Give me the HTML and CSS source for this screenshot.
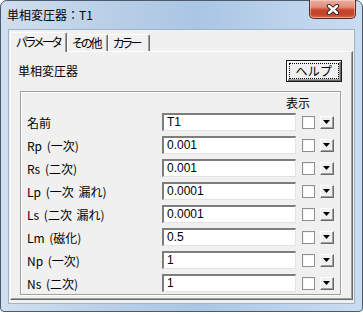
FILE: index.html
```html
<!DOCTYPE html>
<html lang="ja">
<head>
<meta charset="utf-8">
<title>単相変圧器：T1</title>
<link rel="stylesheet" href="styles.css">
</head>
<body>
<div class="window">
  <div class="titlebar">
    <span class="title">単相変圧器：T1</span>
    <div class="close">
      <svg width="14" height="11" viewBox="0 0 14 11">
        <path d="M3 2 L11 9 M11 2 L3 9" stroke="#3d2a2a" stroke-width="4.4" stroke-linecap="round" fill="none"/>
        <path d="M3 2 L11 9 M11 2 L3 9" stroke="#ffffff" stroke-width="2.4" stroke-linecap="round" fill="none"/>
      </svg>
    </div>
  </div>
  <div class="client">
    <div class="tabs">
      <div class="tab active">パラメータ</div>
      <div class="tab">その他</div>
      <div class="tab">カラー</div>
    </div>
    <div class="panel">
      <div class="panel-head">
        <span class="panel-title">単相変圧器</span>
        <button class="help"><span class="focus">ヘルプ</span></button>
      </div>
      <div class="group">
        <div class="show-head">表示</div>
        <div class="row"><span class="label">名前</span><span class="input">T1</span><span class="check"></span><span class="drop"><svg width="7" height="4" viewBox="0 0 7 4"><path d="M0 0 H7 L3.5 4 Z" fill="#000"/></svg></span></div>
        <div class="row"><span class="label">Rp (一次)</span><span class="input">0.001</span><span class="check"></span><span class="drop"><svg width="7" height="4" viewBox="0 0 7 4"><path d="M0 0 H7 L3.5 4 Z" fill="#000"/></svg></span></div>
        <div class="row"><span class="label">Rs (二次)</span><span class="input">0.001</span><span class="check"></span><span class="drop"><svg width="7" height="4" viewBox="0 0 7 4"><path d="M0 0 H7 L3.5 4 Z" fill="#000"/></svg></span></div>
        <div class="row"><span class="label">Lp (一次 漏れ)</span><span class="input">0.0001</span><span class="check"></span><span class="drop"><svg width="7" height="4" viewBox="0 0 7 4"><path d="M0 0 H7 L3.5 4 Z" fill="#000"/></svg></span></div>
        <div class="row"><span class="label">Ls (二次 漏れ)</span><span class="input">0.0001</span><span class="check"></span><span class="drop"><svg width="7" height="4" viewBox="0 0 7 4"><path d="M0 0 H7 L3.5 4 Z" fill="#000"/></svg></span></div>
        <div class="row"><span class="label">Lm (磁化)</span><span class="input">0.5</span><span class="check"></span><span class="drop"><svg width="7" height="4" viewBox="0 0 7 4"><path d="M0 0 H7 L3.5 4 Z" fill="#000"/></svg></span></div>
        <div class="row"><span class="label">Np (一次)</span><span class="input">1</span><span class="check"></span><span class="drop"><svg width="7" height="4" viewBox="0 0 7 4"><path d="M0 0 H7 L3.5 4 Z" fill="#000"/></svg></span></div>
        <div class="row"><span class="label">Ns (二次)</span><span class="input">1</span><span class="check"></span><span class="drop"><svg width="7" height="4" viewBox="0 0 7 4"><path d="M0 0 H7 L3.5 4 Z" fill="#000"/></svg></span></div>
      </div>
    </div>
  </div>
</div>
</body>
</html>
```

FILE: styles.css
```css
html, body {
  margin: 0;
  padding: 0;
  background: #ffffff;
}

body {
  font-family: "Noto Sans CJK JP", "Noto Sans", sans-serif;
  font-size: 12px;
  color: #000;
}

.window {
  box-sizing: border-box;
  width: 363px;
  height: 312px;
  border: 1px solid #4b5a6c;
  border-radius: 7px 7px 4px 4px;
  padding: 0 7px 7px 7px;
  background: linear-gradient(to right, #d0dfee 0%, #b9cfe7 30%, #aac6e4 55%, #bcd3ec 80%, #cadcf0 100%);
  display: flex;
  flex-direction: column;
}

.titlebar {
  height: 28px;
  display: flex;
  justify-content: space-between;
  align-items: flex-start;
  margin: 0 -1px 0 -1px;
}

.title {
  line-height: 28px;
  font-size: 12px;
  color: #000;
}

.close {
  box-sizing: border-box;
  width: 47px;
  height: 19px;
  margin-top: -1px;
  border: 1px solid #5b2a22;
  border-top: none;
  border-radius: 0 0 5px 5px;
  background: linear-gradient(to bottom, #eab0a2 0%, #e08c78 40%, #c9452d 55%, #c4432a 80%, #d7694f 100%);
  box-shadow: inset 0 0 0 1px rgba(255, 220, 210, 0.5);
  display: flex;
  align-items: center;
  justify-content: center;
}

.client {
  flex: 1;
  box-sizing: border-box;
  background: #f0f0f0;
  border: 1px solid #9fb3ca;
  padding: 1px 1px 3px 1px;
  display: flex;
  flex-direction: column;
}

.tabs {
  display: flex;
  align-items: flex-end;
  height: 20px;
  position: relative;
  z-index: 1;
}

.tab {
  box-sizing: border-box;
  width: 41px;
  height: 17px;
  line-height: 15px;
  padding: 0 0 0 4px;
  border-top: 1px solid #ffffff;
  border-left: 1px solid #ffffff;
  border-right: 1px solid #696969;
  box-shadow: inset -1px 0 #a0a0a0;
  border-radius: 2px 2px 0 0;
  background: #f0f0f0;
  font-feature-settings: "palt";
  letter-spacing: -2px;
  white-space: nowrap;
  overflow: hidden;
}

.tab.active {
  width: 57px;
  height: 20px;
  line-height: 17px;
  padding-left: 5px;
  margin-bottom: -1px;
}

.tab:last-child {
  width: 42px;
}

.panel {
  flex: 1;
  box-sizing: border-box;
  border-top: 1px solid #ffffff;
  border-left: 1px solid #ffffff;
  border-right: 1px solid #696969;
  border-bottom: 1px solid #696969;
  box-shadow: inset -1px -1px #a0a0a0;
  background: #f0f0f0;
  padding: 8px 11px 0 7px;
  display: flex;
  flex-direction: column;
}

.panel-head {
  display: flex;
  justify-content: space-between;
  align-items: center;
  height: 21px;
}

.panel-title {
  font-size: 12px;
  margin-top: -1px;
}

.help {
  box-sizing: border-box;
  width: 56px;
  height: 22px;
  margin-right: -1px;
  padding: 2px;
  border: 1px solid #1a1a1a;
  background: #f0f0f0;
  box-shadow: inset 1px 1px #ffffff, inset -1px -1px #696969, inset -2px -2px #a0a0a0;
  font-family: inherit;
  font-size: 12px;
  font-feature-settings: "palt";
  display: flex;
  align-items: stretch;
  justify-content: stretch;
}

.focus {
  flex: 1;
  border: 1px dotted #000;
  line-height: 14px;
  text-align: center;
  letter-spacing: 1px;
}

.group {
  margin: 10px 0 0 2px;
  box-sizing: border-box;
  border: 1px solid #a0a0a0;
  box-shadow: inset 1px 1px #ffffff, 1px 1px #ffffff;
  padding: 3px 6px 2px 6px;
  display: flex;
  flex-direction: column;
  gap: 5px;
}

.show-head {
  height: 15px;
  line-height: 15px;
  margin-bottom: -2px;
  text-align: right;
  padding-right: 24px;
}

.row {
  display: flex;
  align-items: center;
  height: 18px;
}

.label {
  width: 135px;
  white-space: nowrap;
  word-spacing: 2px;
}

.input {
  box-sizing: border-box;
  width: 134px;
  height: 18px;
  line-height: 14px;
  padding: 0 3px;
  background: #ffffff;
  border-top: 2px solid #7d7d7d;
  border-left: 2px solid #7d7d7d;
  border-bottom: 1px solid #e3e3e3;
  border-right: 1px solid #e3e3e3;
  font-family: "Liberation Sans", "Noto Sans", sans-serif;
  font-size: 12px;
}

.check {
  box-sizing: border-box;
  width: 13px;
  height: 13px;
  margin-left: 6px;
  background: #ffffff;
  border: 1px solid #8e8f8f;
  box-shadow: inset 1px 1px #f4f4f4;
}

.drop {
  box-sizing: border-box;
  width: 14px;
  height: 13px;
  margin-left: 5px;
  background: #f0f0f0;
  border-top: 1px solid #ffffff;
  border-left: 1px solid #ffffff;
  border-right: 1px solid #696969;
  border-bottom: 1px solid #696969;
  box-shadow: inset -1px -1px #a0a0a0;
  display: flex;
  align-items: center;
  justify-content: center;
}

.drop svg {
  display: block;
  margin: 0 1px 1px 0;
}
```
